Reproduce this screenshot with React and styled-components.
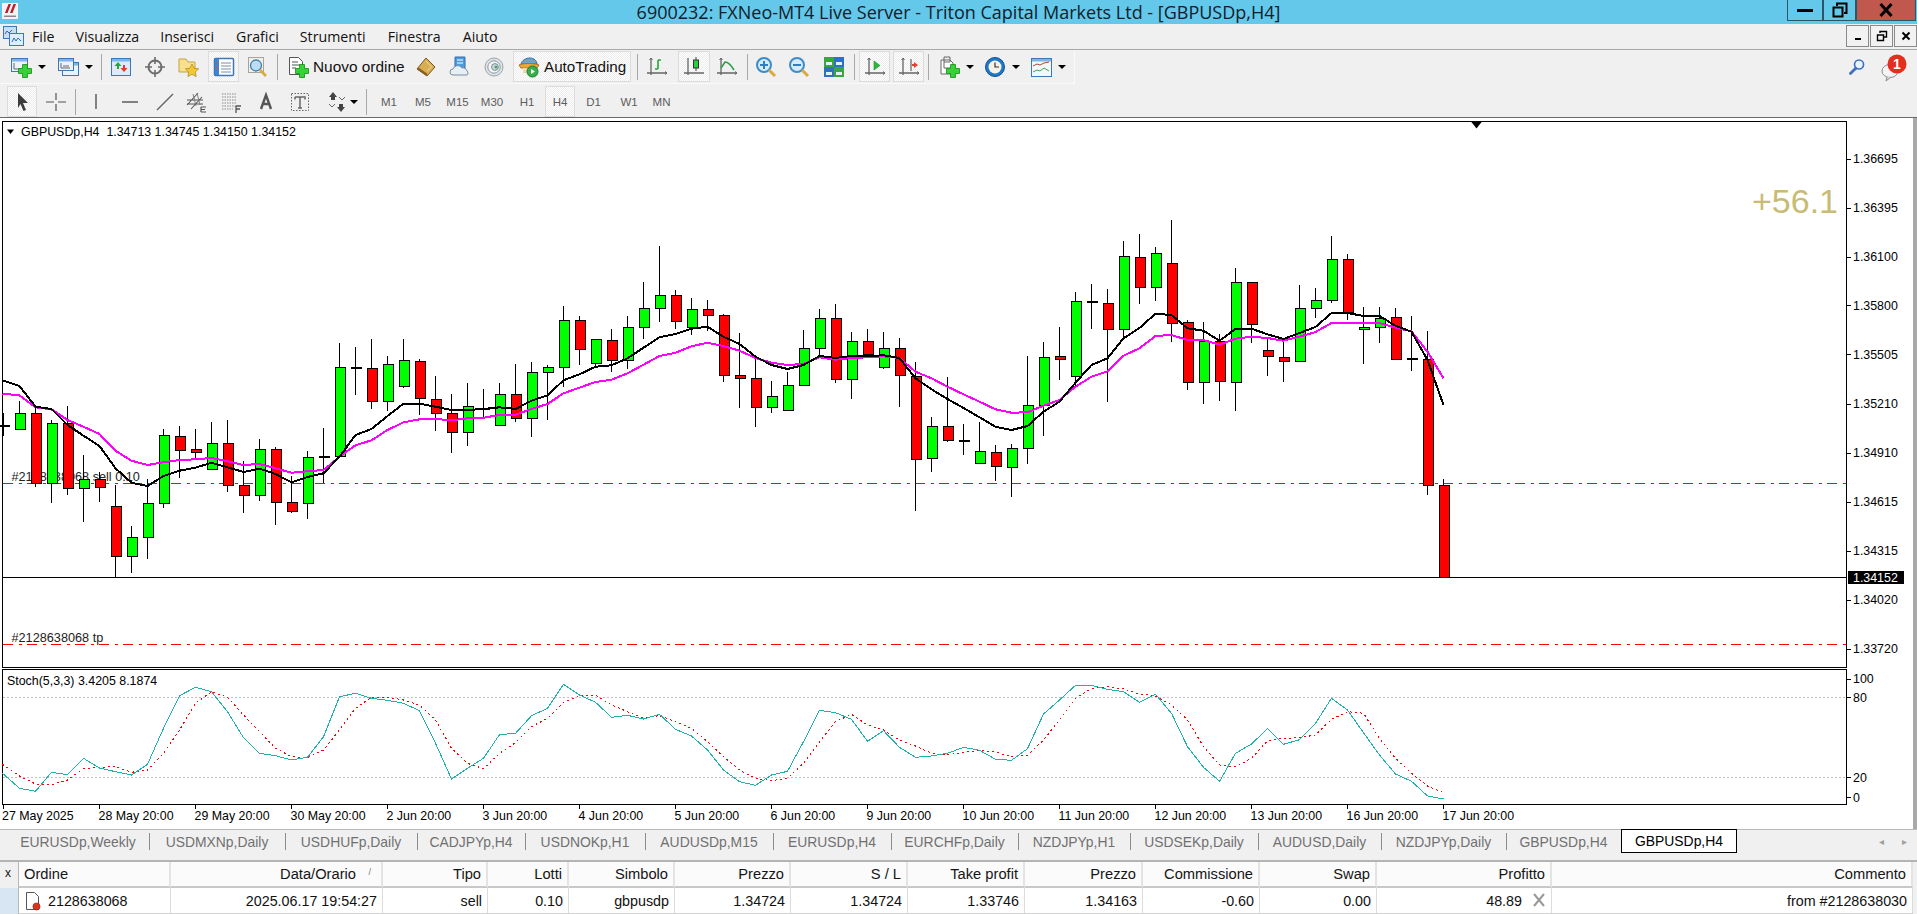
import React from "react";
import styled, { createGlobalStyle } from "styled-components";

const UI = '"Liberation Sans", Arial, sans-serif';

const Global = createGlobalStyle`
  html, body { margin: 0; padding: 0; background: #f0f0f0; overflow: hidden; }
  * { box-sizing: border-box; }
`;

const Page = styled.div`
  width: 1917px; height: 914px; display: flex; flex-direction: column;
  background: #f0f0f0; font-family: ${UI}; overflow: hidden;
`;

/* ---------- title bar ---------- */
const TitleBar = styled.div`
  height: 24px; flex: none; background: #63c8ea;
  display: grid; grid-template-columns: 1fr auto 1fr; align-items: start;
`;
const LogoBox = styled.div`padding: 3px 0 0 2px; height: 24px;`;
const TitleText = styled.div`
  font-family: "Open Sans", ${UI}; font-size: 18px; line-height: 24px; color: #10202a; white-space: nowrap;
`;
const WinButtons = styled.div`display: flex; justify-content: flex-end; padding-right: 1px;`;
const WinButton = styled.div`
  width: ${p => p.$w}px; height: 21px; display: flex; align-items: center; justify-content: center;
  border: 1px solid #2b5568; border-top: none; border-left-width: ${p => p.$first ? 1 : 0}px;
  background: ${p => p.$close ? "#c0584e" : "transparent"};
`;

/* ---------- menu ---------- */
const MenuBar = styled.div`
  height: 26px; flex: none; display: flex; align-items: center; background: #f0f0f0;
  border-bottom: 1px solid #a8a8a8;
`;
const MenuIconBox = styled.div`width: 32px; padding-left: 3px; display: flex; align-items: center;`;
const MenuItem = styled.div`
  font-family: "Open Sans", ${UI}; font-size: 14.2px; color: #111; margin-right: ${p => p.$gap}px; line-height: 24px;
`;
const ChildButtons = styled.div`margin-left: auto; display: flex; gap: 1px; align-self: flex-start; padding-top: 1px;`;
const ChildButton = styled.div`
  width: 23px; height: 22px; border: 1px solid #8a8a8a; display: flex; align-items: center; justify-content: center; background: #f2f2f2;
`;

/* ---------- toolbars ---------- */
const Band = styled.div`
  height: ${p => p.$h}px; flex: none; display: flex; align-items: stretch; justify-content: space-between;
  background: #f0f0f0;
`;
const Toolbar = styled.div`
  display: flex; align-items: center; height: 100%; padding-top: ${p => p.$pt ?? 0}px;
  border-bottom: 1px solid ${p => p.$edge ? "#fafafa" : "transparent"};
  border-right: 1px solid ${p => p.$edge ? "#fafafa" : "transparent"};
`;
const Grip = styled.div`width: ${p => p.$w}px; height: 100%; flex: none;`;
const Sep = styled.div`width: 1px; height: 26px; flex: none; background: #a8a8a8;`;
const Tool = styled.div`
  width: ${p => p.$w}px; height: 31px; flex: none; display: flex; align-items: center; justify-content: center;
  gap: ${p => p.$gap ?? 6}px; margin-left: ${p => p.$ml ?? 0}px;
  ${p => p.$on && `
    border: 1px solid #dcdcdc;
    background: repeating-conic-gradient(#ffffff 0 25%, #ececec 0 50%) 0 0 / 2px 2px;
  `}
`;
const Caret = styled.span`
  width: 0; height: 0; flex: none; border-left: 4px solid transparent; border-right: 4px solid transparent; border-top: 4px solid #000;
`;
const LabelTool = styled.div`
  height: 31px; flex: none; display: flex; align-items: center; gap: 4px; padding: 0 0 0 9px;
  font-size: 15.4px; color: #111; white-space: nowrap; width: 132px;
`;
const AutoTrading = styled.div`
  height: 31px; width: 118px; flex: none; margin-left: 3px; display: flex; align-items: center; gap: 4px; padding-left: 4px;
  font-size: 15.2px; color: #111; white-space: nowrap;
  border: 1px solid #dcdcdc;
  background: repeating-conic-gradient(#ffffff 0 25%, #ececec 0 50%) 0 0 / 2px 2px;
`;
const Period = styled.div`
  width: ${p => p.$w}px; height: 31px; flex: none; display: flex; align-items: center; justify-content: center;
  font-size: 11.5px; color: #5c5c5c;
  ${p => p.$on && `
    border: 1px solid #dcdcdc;
    background: repeating-conic-gradient(#ffffff 0 25%, #ececec 0 50%) 0 0 / 2px 2px;
  `}
`;
const RightTools = styled.div`display: flex; align-items: flex-start; padding-top: 4px; padding-right: 9px; gap: 12px;`;
const SearchBox = styled.div`margin-top: 4px; display: flex;`;

/* ---------- chart window ---------- */
const ChartRow = styled.div`
  height: 712px; flex: none; display: flex; background: #fff; border-top: 1px solid #6a6a6a; margin-top: 0;
`;
const ChartSvg = styled.svg`display: block; flex: none; background: #fff;`;
const ScrollEdge = styled.div`flex: 1; background: #a9a9a9; margin-left: 1px;`;

/* ---------- tabs ---------- */
const TabBar = styled.div`
  height: 24px; flex: none; display: flex; align-items: stretch; padding-left: 7px; position: relative;
  border-top: 1px solid #b8b8b8; background: #f0f0f0;
`;
const Tab = styled.div`
  width: ${p => p.$w}px; flex: none; display: flex; align-items: center; justify-content: center;
  font-size: 13.9px; white-space: nowrap; color: ${p => p.$on ? "#000" : "#707070"};
  ${p => p.$on
    ? `background:#fff; border-right:1px solid #000; border-bottom:1px solid #000; border-top:1px solid #000; border-left:1px solid #000; margin-top:-1px;`
    : `&::after{content:"";}`}
`;
const TabSep = styled.div`width: 1px; margin: 3px -1px 3px 0; background: #8c8c8c; flex: none;`;
const TabArrows = styled.div`
  position: absolute; right: 10px; top: 6px; display: flex; gap: 18px; color: #a0a0a0; font-size: 10px;
`;
const Spacer = styled.div`height: ${p => p.$h}px; flex: none;`;

/* ---------- orders table ---------- */
const Dock = styled.div`height: 54px; flex: none; display: flex; border-top: 2px solid #b4b4b4;`;
const DockSide = styled.div`
  width: 18px; flex: none; display: flex; flex-direction: column; background: #f0f0f0;
`;
const DockClose = styled.div`height: 26px; font-size: 12px; color: #111; padding: 4px 0 0 5px;`;
const DockBlue = styled.div`flex: 1; background: #d8e5f3;`;
const Table = styled.div`
  width: 1894px; flex: none; display: grid; grid-template-columns: 152px 212px 105px 81px 106px 116px 117px 117px 118px 117px 117px 175px 361px;
  grid-template-rows: 26px 25px 1fr; border-left: 1px solid #b8b8b8;
`;
const HeadCell = styled.div`
  background: #fbfbfb; border-right: 2px solid #e4e4e4; border-bottom: 2px solid #c8c8c8;
  display: flex; align-items: center; justify-content: ${p => p.$left ? "flex-start" : "flex-end"};
  padding: 0 ${p => p.$pr ?? 5}px 0 5px; font-size: 14.7px; color: #151515; white-space: nowrap; position: relative;
`;
const SortMark = styled.span`position: absolute; right: 10px; top: 5px; font-size: 9px; color: #777;`;
const Cell = styled.div`
  background: #fff; border-right: 1px solid #dcdcdc;
  display: flex; align-items: center; justify-content: ${p => p.$left ? "flex-start" : "flex-end"};
  padding: 0 ${p => p.$pr ?? 5}px 0 5px; font-size: 14.3px; color: #111; white-space: nowrap; gap: 6px; position: relative;
`;
const CloseMark = styled.span`position: absolute; right: 4px; top: 5px; display: flex;`;
const Foot = styled.div`grid-column: 1 / -1; background: #d2d2d2;`;

/* ---------- icons ---------- */
const Svg = ({ s = 22, children, vb = "0 0 22 22" }) => <svg width={s} height={s} viewBox={vb}>{children}</svg>;
const Plus = ({ x = 0, y = 0 }) => (
  <path transform={`translate(${x} ${y})`} d="M4 0h5v4h4v5H9v4H4V9H0V4h4z" fill="#35d335" stroke="#168a16" strokeWidth=".8" />
);
const Wnd = ({ x, y, w, h, f = "#eaf3fc" }) => (
  <g>
    <rect x={x + .5} y={y + .5} width={w} height={h} fill={f} stroke="#3c78b8" />
    <rect x={x + 1} y={y + 1} width={w - 1} height="2.5" fill="#7fb4e6" />
  </g>
);
const Axes = ({ c = "#666" }) => (
  <g stroke={c} strokeWidth="1.3" fill="none">
    <path d="M5 2v17M1 17h20" />
    <path d="M3.5 4L5 2l1.5 2M19 15.5l2 1.5-2 1.5" strokeWidth="1" />
  </g>
);
const I = {
  newChart: <Svg><Wnd x={1} y={2} w={16} h={13} /><path d="M4 7v6h8" stroke="#667" fill="none" /><Plus x={8.5} y={8.5} /></Svg>,
  profiles: <Svg><Wnd x={5} y={6} w={16} h={13} /><Wnd x={1} y={2} w={15} h={12} /><path d="M4 7v5h9M6 10h6" stroke="#667" fill="none" /></Svg>,
  market: <Svg><Wnd x={1} y={2} w={19} h={17} f="#dcebf9" /><path d="M8 6l3.5 4H9v3H7v-3H4.5z" fill="#22aa33" /><path d="M14 16l-3.5-4H13V9h2v3h2.5z" fill="#e23a2a" /></Svg>,
  data: <Svg><circle cx="11" cy="11" r="6.5" fill="none" stroke="#6c6c6c" strokeWidth="2" /><path d="M11 1v7M11 14v7M1 11h7M14 11h7" stroke="#6c6c6c" strokeWidth="1.6" /></Svg>,
  nav: <Svg><path d="M1 3h7l2 3h7v10H1z" fill="#f8e08e" stroke="#c7a23c" /><path d="M14 8l2.1 4.2 4.6.6-3.4 3.2.9 4.6-4.2-2.3-4.1 2.3.8-4.6-3.3-3.2 4.6-.6z" fill="#f4c832" stroke="#a88417" strokeWidth=".7" /></Svg>,
  terminal: <Svg><rect x="1.5" y="2.5" width="19" height="17" rx="1" fill="#fff" stroke="#3c78b8" strokeWidth="1.5" /><rect x="2" y="3" width="4" height="16" fill="#3f86d2" /><path d="M8 7h10M8 10h10M8 13h10M8 16h10" stroke="#7b8da3" /><path d="M3 7h2M3 10h2M3 13h2" stroke="#e04c3c" /></Svg>,
  tester: <Svg><rect x="1.5" y="1.5" width="15" height="15" fill="#f2efe8" stroke="#a9a49a" /><circle cx="9" cy="9.5" r="5.5" fill="#bcdcf2" stroke="#3f7fb0" strokeWidth="1.3" /><path d="M13 14l6 6" stroke="#d8ab3c" strokeWidth="2.6" /></Svg>,
  order: <Svg><path d="M2.5 1.5h9l4 4v13h-13z" fill="#fff" stroke="#555" /><path d="M5 6h6M5 9h8M5 12h4" stroke="#555" /><Plus x={8.5} y={8.5} /></Svg>,
  editor: <Svg><path d="M11 2l9 9-8 9-10-7z" fill="#d9ad52" stroke="#7c5620" /><path d="M2 13l10 7v-2.5L3.5 11.5z" fill="#8a5e24" /><path d="M11 5l5.5 6-4.5 4" stroke="#f1dc9c" fill="none" /></Svg>,
  cloud: <Svg><path d="M6 1h10v12H6z" fill="#4e9be0" stroke="#2f6eb0" /><path d="M8 4h6M8 7h6" stroke="#fff" /><path d="M4 19a3 3 0 0 1 0-6 5 5 0 0 1 9-1 4 4 0 0 1 5 3 2.5 2.5 0 0 1 0 4z" fill="#e6eef6" stroke="#7c8ca0" /></Svg>,
  signal: <Svg><circle cx="11" cy="11" r="9" fill="#dfe3e6" stroke="#9aa5ad" /><circle cx="11" cy="11" r="6.2" fill="#f2f4f5" stroke="#8b9aa5" /><circle cx="12" cy="11" r="3.4" fill="#cfd7dc" stroke="#7a8e9c" /><circle cx="13" cy="11" r="1.5" fill="#45a55a" /></Svg>,
  auto: <Svg><path d="M3 8c1-4 5-6 9-6s7 3 7 6z" fill="#6da4cc" stroke="#3f6f94" /><path d="M1 9c4-2 15-2 20 0l-2 3H3z" fill="#e9a93a" stroke="#a8741c" /><path d="M5 12h11v5H5z" fill="#f3d9a8" /><circle cx="14.5" cy="15.5" r="5.5" fill="#35b04a" stroke="#1d7c2e" /><path d="M13 13l4 2.5-4 2.5z" fill="#fff" /></Svg>,
  bars: <Svg><Axes /><path d="M12 4v9M12 4h3M12 13H9" stroke="#25a83a" strokeWidth="1.6" fill="none" /></Svg>,
  candles: <Svg><path d="M5 2v17M1 17h20" stroke="#666" strokeWidth="1.3" fill="none" /><path d="M13 1v14" stroke="#444" /><rect x="10.5" y="4" width="5" height="8" fill="#25d23a" stroke="#333" /></Svg>,
  line: <Svg><Axes /><path d="M5 12l4-6c3 0 6 3 9 8" stroke="#2f9e4a" strokeWidth="1.6" fill="none" /></Svg>,
  zoomIn: <Svg><circle cx="9" cy="9" r="7" fill="#d5ebf9" stroke="#3c8cc8" strokeWidth="2" /><path d="M5 9h8M9 5v8" stroke="#2f7fc0" strokeWidth="2" /><path d="M14 14l6 6" stroke="#d8ab3c" strokeWidth="3" /></Svg>,
  zoomOut: <Svg><circle cx="9" cy="9" r="7" fill="#d5ebf9" stroke="#3c8cc8" strokeWidth="2" /><path d="M5 9h8" stroke="#2f7fc0" strokeWidth="2" /><path d="M14 14l6 6" stroke="#d8ab3c" strokeWidth="3" /></Svg>,
  tile: <Svg><rect x="1" y="1" width="10" height="10" fill="#38a83a" /><rect x="11" y="1" width="10" height="10" fill="#2f6fc8" /><rect x="1" y="11" width="10" height="10" fill="#2f6fc8" /><rect x="11" y="11" width="10" height="10" fill="#38a83a" /><path d="M3 6h6v3H3zM13 6h6v3h-6zM3 16h6v3H3zM13 16h6v3h-6z" fill="#e4f0fb" /></Svg>,
  scroll: <Svg><Axes /><path d="M10 5l6 4.5-6 4.5z" fill="#2fb83f" stroke="#1f8a2c" strokeWidth=".6" /></Svg>,
  shift: <Svg><Axes /><path d="M13 3v12" stroke="#444" /><path d="M20 9l-4-3v2h-2v2h2v2z" fill="#e2402a" /></Svg>,
  indic: <Svg><path d="M3 4h9l3 3v11H3z" fill="#fff" stroke="#666" /><path d="M6 1h6v5H6zM6 6v6h6" stroke="#666" fill="none" /><Plus x={8.5} y={8.5} /></Svg>,
  clock: <Svg><circle cx="11" cy="11" r="9.5" fill="#1f78c8" stroke="#0f4f8c" /><circle cx="11" cy="11" r="6.5" fill="#f6f3e6" /><path d="M11 6.5V11h4" stroke="#333" strokeWidth="1.2" fill="none" /></Svg>,
  tmpl: <Svg><Wnd x={1} y={2} w={20} h={18} f="#f4f8fc" /><path d="M3 10l4-2 3 1 4-2 5-1" stroke="#b04a2a" fill="none" /><path d="M3 16l4-2 3 1 4-3 5 3" stroke="#3ca84a" fill="none" /></Svg>,
  cursor: <Svg><path d="M7 2l10 10h-5l3 7-2.5 1-3-7L7 17z" fill="#3c3c3c" /></Svg>,
  cross: <Svg><path d="M11 2v7M11 13v7M1 11h8M13 11h8" stroke="#555" strokeWidth="1.2" /></Svg>,
  vline: <Svg><path d="M11 3v15" stroke="#666" strokeWidth="1.6" /></Svg>,
  hline: <Svg><path d="M3 11h16" stroke="#666" strokeWidth="1.6" /></Svg>,
  trend: <Svg><path d="M3 19L19 3" stroke="#666" strokeWidth="1.4" /></Svg>,
  channel: <Svg><path d="M1 14L12 2M5 18L16 6M1 9h16M1 13h16" stroke="#555" strokeWidth="1.1" /><path d="M7 3l3 12M11 2l3 12" stroke="#777" strokeWidth=".9" /><path d="M15 16h5M15 18.5h4M15 21h5M15 16v5" stroke="#555" strokeWidth="1.2" /></Svg>,
  fibo: <Svg><path d="M1 3h15M1 6h15M1 9h15M1 12h15M1 15h15M1 18h11" stroke="#8a8a8a" strokeDasharray="1.5 1" /><path d="M15 15h5M15 18h4M15 15v7" stroke="#555" strokeWidth="1.3" /></Svg>,
  letterA: <Svg><path d="M6 18l5-14 5 14M8 13h6" stroke="#555" strokeWidth="2.4" fill="none" /></Svg>,
  label: <Svg><rect x="2.5" y="2.5" width="17" height="17" fill="none" stroke="#666" strokeDasharray="1.5 1.5" /><path d="M6 6h10v2.5M6 6v2.5M11 6v11M9 17h4" stroke="#666" strokeWidth="1.5" fill="none" /></Svg>,
  arrows: <Svg><path d="M7 1l4 5H9v3H5V6H3z" fill="#444" /><path d="M15 21l-4-5h2v-3h4v3h2z" fill="#444" /><path d="M3 13l3 3 3-3M13 6l3 3 3-3" stroke="#666" fill="none" /></Svg>,
  search: <Svg s={18}><circle cx="13.5" cy="8" r="5.5" fill="#eaf2fb" stroke="#3f6fc0" strokeWidth="2" /><path d="M9.5 12.5L3 19" stroke="#3f6fc0" strokeWidth="3.4" strokeLinecap="round" /></Svg>,
};

const LogoIcon = () => (
  <svg width="16" height="16" viewBox="0 0 16 16">
    <rect width="16" height="16" fill="#f4f4f4" />
    <path d="M3 10l3.5-9h2.5l-3.5 9zM8 10l3.5-9h2.5l-3.5 9z" fill="#b81c24" />
    <path d="M2 12.5h12v1.5H2z" fill="#888" />
  </svg>
);
const MenuIcon = () => (
  <svg width="21" height="21" viewBox="0 0 21 21">
    <rect x=".5" y=".5" width="13" height="12" fill="#c8def5" stroke="#3c78b8" />
    <rect x="6.5" y="7.5" width="14" height="12" fill="#e0eefb" stroke="#3c78b8" />
    <path d="M2 8l2-3 2 2 3-3M9 16l2-4 2 3 2-3 3 3" stroke="#2d6cb0" fill="none" />
  </svg>
);
const ChatBadge = () => (
  <svg width="30" height="28" viewBox="0 0 30 28">
    <ellipse cx="12" cy="17" rx="8" ry="6.5" fill="#f4f4f4" stroke="#8c8c8c" />
    <path d="M9 23l-1 4 5-4" fill="#dcdcdc" stroke="#8c8c8c" />
    <circle cx="19" cy="10" r="9.5" fill="#e0301e" />
    <text x="19" y="15" textAnchor="middle" fontFamily={UI} fontWeight="700" fontSize="14" fill="#fff">1</text>
  </svg>
);

/* ---------- chart data (pixel rows read from the picture) ---------- */
const G = "g", R = "r", D = "d";
const C1 = [[D,257,257,220,288],[G,220,268,183,268],[R,220,430,205,440],[G,250,430,240,488],[R,250,445,198,465],[G,418,445,345,545],[R,418,442,395,485],[R,499,650,435,715],[G,592,650,558,698],[G,490,592,418,658],[G,286,490,267,503],[R,289,331,258,413],[R,328,338,267,355],[G,310,388,246,388],[R,310,436,240,455],[R,436,466,363,518],[G,328,466,297,482],[R,328,487,322,554],[R,487,514,408,518],[G,352,490,333,536],[D,351,351,264,430],[G,82,349,10,355],[D,83,83,21,165],[R,85,184,-3,206],[G,73,184,48,213],[G,61,139,-3,143],[R,64,175,57,225],[R,178,220,108,273],[R,220,277,162,339],[G,199,277,129,318]];
const C2 = [[D,537,537,477,565],[G,493,586,459,586],[R,493,565,402,575],[G,427,565,396,620],[G,412,427,405,570],[G,271,412,228,470],[R,271,358,258,404],[G,328,400,328,412],[R,331,391,297,426],[G,292,391,258,416],[G,235,292,156,326],[G,196,235,48,276],[R,196,274,180,297],[G,238,292,205,315],[R,238,256,210,302],[R,256,436,252,456],[R,436,445,309,533],[R,445,532,385,590],[G,499,532,453,548],[G,466,541,426,541],[G,355,466,300,466],[G,265,355,237,378],[R,265,448,222,458],[G,334,448,306,506],[R,334,373,297,380],[G,355,412,306,418],[R,355,436,324,530],[R,439,688,396,842],[G,589,685,561,725],[R,589,631,441,635]];
const C3 = [[D,692,692,642,734],[G,724,760,636,760],[R,727,769,705,812],[G,715,772,702,862],[G,586,715,438,761],[G,442,586,396,677],[R,439,448,351,510],[G,274,499,246,530],[D,275,275,222,356],[R,280,358,237,575],[G,139,358,93,385],[R,142,232,72,281],[G,130,232,111,272],[R,160,340,30,395],[R,337,517,330,539],[G,394,517,336,581],[R,394,514,372,572],[G,217,517,175,602],[R,217,343,217,398],[R,421,439,388,497],[R,442,454,390,515],[G,295,454,226,454],[G,271,295,235,324],[G,148,271,78,278],[R,148,307,132,330],[G,352,358,292,461],[G,325,352,292,398],[R,322,448,294,448],[D,448,448,318,482],[R,448,826,363,854],[R,826,1102,808,1102]];

const map = (arr, oy) => arr.map(v => oy + v / 3);
const candles = [
  ...C1.map(c => [c[0], ...map(c.slice(1), 340)]),
  ...C2.map(c => [c[0], ...map(c.slice(1), 230)]),
  ...C3.map(c => [c[0], ...map(c.slice(1), 210)]),
];
const black = [
  ...map([121,138,200,207,255,287,318,385,428,438,408,392,383,368,382,396,386,402,427,411,400,350,285,267,228,191,191,200,210,210], 340),
  ...map([537,532,537,512,496,451,433,410,406,385,353,322,312,296,290,320,342,380,405,417,405,378,384,378,378,376,384,445,478,507], 230),
  ...map([594,622,650,660,648,605,575,518,465,445,385,354,311,315,355,362,392,357,356,373,387,369,351,309,309,318,318,347,365,450,585], 210),
];
const magenta = [
  ...map([161,166,202,208,240,260,282,332,362,375,367,360,358,354,364,375,372,385,398,394,390,350,316,301,270,247,238,237,241,235], 340),
  ...map([563,555,554,537,522,490,473,456,449,430,404,378,368,349,338,348,362,384,398,405,402,382,389,384,382,379,384,425,445,470], 230),
  ...map([553,575,598,608,607,587,570,530,500,484,437,415,378,375,390,390,404,386,380,384,392,380,366,339,339,339,339,353,364,425,505], 210),
];
const teal = [
  ...map([400,445,454,397,404,355,384,395,405,373,265,167,142,155,215,293,340,347,360,352,290,170,160,175,181,190,212,310,417,385,355,284,280,227,205,133,165,187,232], 640),
  ...map([136,147,133,178,198,240,300,335,346,315,304,215,121,128,148,214,182,232,262,258,250,232,241,268,271,236,132,90,46,46,58,65,97,73,130,230,292,334,250,222,176,223,209,160,85,120,188,255,312,334,378,387], 670),
];
const redDot = [
  ...map([373,408,432,434,420,386,382,380,397,390,340,270,190,155,172,225,275,325,350,353,330,270,205,172,172,180,195,240,325,370,386,340,308,260,235,187,168,165,195], 640),
  ...map([125,144,137,155,175,215,260,300,325,332,325,280,215,155,133,165,180,210,228,250,255,247,241,246,260,256,210,150,85,55,50,57,72,78,105,150,230,285,290,265,212,205,203,195,148,125,130,205,265,310,348,368], 670),
];
const cx = i => 3.5 + 16 * i;
const pts = ys => ys.map((y, i) => `${i === 0 ? 2.5 : cx(i)},${y.toFixed(1)}`).join(" ");

const priceLabels = [["1.36695",158.7],["1.36395",207.5],["1.36100",256.7],["1.35800",305.3],["1.35505",354.3],["1.35210",403.7],["1.34910",452.7],["1.34615",501.7],["1.34315",550.7],["1.34020",599.7],["1.33720",648.7]];
const stochLabels = [["100",678.5],["80",697.3],["20",777.3],["0",797]];
const timeLabels = ["27 May 2025","28 May 20:00","29 May 20:00","30 May 20:00","2 Jun 20:00","3 Jun 20:00","4 Jun 20:00","5 Jun 20:00","6 Jun 20:00","9 Jun 20:00","10 Jun 20:00","11 Jun 20:00","12 Jun 20:00","13 Jun 20:00","16 Jun 20:00","17 Jun 20:00"];

const TXT = { fontFamily: UI, fontSize: 12.4, fill: "#000", style: { whiteSpace: "pre" } };

const Chart = () => (
  <ChartSvg width="1912" height="711" viewBox="0 118 1912 711">
    {/* frames */}
    <g shapeRendering="crispEdges" stroke="#000" fill="none">
      <path d="M2.5 121.5H1846.5V667.5H2.5zM2.5 669.5H1846.5V804.5H2.5z" />
      {priceLabels.map(([t, y]) => <path key={t} d={`M1847 ${Math.round(y) + .5}h4`} />)}
      {stochLabels.map(([t, y]) => <path key={t} d={`M1847 ${Math.round(y) + .5}h4`} />)}
      {timeLabels.map((t, i) => <path key={t} d={`M${3.5 + 96 * i} 805v4`} />)}
    </g>

    {/* header + trade labels, under the candles */}
    <path d="M7 129.5h7l-3.5 4.5z" fill="#000" />
    <text x="21" y="136.3" {...TXT}>{"GBPUSDp,H4  1.34713 1.34745 1.34150 1.34152"}</text>
    <text x="11.5" y="481" {...TXT} fontSize="12.7" fill="#222">#2128638068 sell 0.10</text>
    <text x="11.5" y="642" {...TXT} fontSize="12.7" fill="#222">#2128638068 tp</text>
    <path d="M1471 121.5h11l-5.5 7z" fill="#000" />

    <text x="1838" y="213" textAnchor="end" fontFamily={UI} fontSize="34" fill="#c8bc74">+56.1</text>

    {/* horizontal levels */}
    <g shapeRendering="crispEdges">
      <path d="M3 483.5H1846" stroke="#ff0000" strokeDasharray="10 6 3 5" />
      <path d="M3 644.5H1846" stroke="#ff0000" strokeDasharray="10 6 3 5" />
      <path d="M3 577.5H1846" stroke="#000" />
    </g>

    {/* candles */}
    <g shapeRendering="crispEdges">
      {candles.map(([t, top, bot, wt, wb], i) => {
        const x = cx(i);
        return (
          <g key={i}>
            <path d={`M${x} ${wt}V${wb}`} stroke="#000" />
            {t === D
              ? <rect x={x - 5} y={Math.round(top) - 1} width="11" height="2" fill="#000" />
              : <rect x={x - 4.5} y={Math.round(top) + .5} width="10" height={Math.max(1, Math.round(bot - top))} fill={t === G ? "#00ff00" : "#ff0000"} stroke="#000" />}
          </g>
        );
      })}
    </g>

    {/* moving averages */}
    <polyline points={pts(magenta)} fill="none" stroke="#ff00ff" strokeWidth="2" strokeLinejoin="round" shapeRendering="crispEdges" />
    <polyline points={pts(black)} fill="none" stroke="#000" strokeWidth="2" strokeLinejoin="round" shapeRendering="crispEdges" />

    {/* price axis */}
    {priceLabels.map(([t, y]) => <text key={t} x="1853" y={y + 4.5} {...TXT}>{t}</text>)}
    <rect x="1848" y="571" width="56" height="13" fill="#000" />
    <text x="1853" y="581.8" {...TXT} fill="#fff">1.34152</text>

    {/* stochastic */}
    <text x="7" y="685" {...TXT}>Stoch(5,3,3) 3.4205 8.1874</text>
    <g shapeRendering="crispEdges">
      <path d="M3 697.5H1846M3 777.5H1846" stroke="#c0c0c0" strokeDasharray="2 2" />
    </g>
    <polyline points={pts(redDot)} fill="none" stroke="#ff0000" strokeDasharray="2 3" shapeRendering="crispEdges" />
    <polyline points={pts(teal)} fill="none" stroke="#20b2aa" shapeRendering="crispEdges" />
    {stochLabels.map(([t, y]) => <text key={t} x="1853" y={y + 4.5} {...TXT}>{t}</text>)}

    {/* time axis */}
    {timeLabels.map((t, i) => <text key={t} x={i === 0 ? 2 : 2.5 + 96 * i} y="820" {...TXT}>{t}</text>)}
  </ChartSvg>
);

const tabs = [
  ["EURUSDp,Weekly",142],["USDMXNp,Daily",136],["USDHUFp,Daily",132],["CADJPYp,H4",108],["USDNOKp,H1",120],["AUDUSDp,M15",128],["EURUSDp,H4",118],["EURCHFp,Daily",127],["NZDJPYp,H1",112],["USDSEKp,Daily",128],["AUDUSD,Daily",123],["NZDJPYp,Daily",125],["GBPUSDp,H4",115],
];
const heads = ["Data/Orario","Tipo","Lotti","Simbolo","Prezzo","S / L","Take profit","Prezzo","Commissione","Swap"];
const vals = ["2025.06.17 19:54:27","sell","0.10","gbpusdp","1.34724","1.34724","1.33746","1.34163","-0.60","0.00"];

const OrderIcon = () => (
  <svg width="18" height="20" viewBox="0 0 18 20">
    <path d="M2.5 1.5h8l4 4v13h-12z" fill="#fff" stroke="#555" />
    <circle cx="12.5" cy="15.5" r="3.6" fill="#d8351e" stroke="#8c2010" strokeWidth=".6" />
  </svg>
);

export default function App() {
  return (
    <Page>
      <Global />
      <TitleBar>
        <LogoBox><LogoIcon /></LogoBox>
        <TitleText>6900232: FXNeo-MT4 Live Server - Triton Capital Markets Ltd - [GBPUSDp,H4]</TitleText>
        <WinButtons>
          <WinButton $w={36} $first><svg width="16" height="4"><rect width="16" height="3" y="1" fill="#000" /></svg></WinButton>
          <WinButton $w={33} $first><svg width="16" height="16" viewBox="0 0 16 16"><path d="M1.5 5.5h9v9h-9zM5 4V1.5h9.5V11H12" fill="none" stroke="#000" strokeWidth="2" /></svg></WinButton>
          <WinButton $w={60} $close $first><svg width="14" height="14" viewBox="0 0 14 14"><path d="M1.5 1L12.5 13M12.5 1L1.5 13" stroke="#000" strokeWidth="3" /></svg></WinButton>
        </WinButtons>
      </TitleBar>

      <MenuBar>
        <MenuIconBox><MenuIcon /></MenuIconBox>
        <MenuItem $gap={21}>File</MenuItem>
        <MenuItem $gap={21}>Visualizza</MenuItem>
        <MenuItem $gap={22}>Inserisci</MenuItem>
        <MenuItem $gap={21}>Grafici</MenuItem>
        <MenuItem $gap={22}>Strumenti</MenuItem>
        <MenuItem $gap={22}>Finestra</MenuItem>
        <MenuItem $gap={0}>Aiuto</MenuItem>
        <ChildButtons>
          <ChildButton><svg width="10" height="10"><rect x="2" y="7" width="6" height="2" fill="#000" /></svg></ChildButton>
          <ChildButton><svg width="12" height="12" viewBox="0 0 12 12"><path d="M1.5 5h6v5.5h-6zM4 3V1.5h6.5V7H8" fill="none" stroke="#000" strokeWidth="1.4" /></svg></ChildButton>
          <ChildButton><svg width="10" height="10" viewBox="0 0 10 10"><path d="M1.5 1.5l7 7M8.5 1.5l-7 7" stroke="#000" strokeWidth="2" /></svg></ChildButton>
        </ChildButtons>
      </MenuBar>

      <Band $h={34}>
        <Toolbar $edge>
          <Grip $w={8} />
          <Tool $w={40}>{I.newChart}<Caret /></Tool>
          <Tool $w={53}>{I.profiles}<Caret /></Tool>
          <Sep />
          <Tool $w={38}>{I.market}</Tool>
          <Tool $w={30}>{I.data}</Tool>
          <Tool $w={38}>{I.nav}</Tool>
          <Tool $w={31} $on>{I.terminal}</Tool>
          <Tool $w={38}>{I.tester}</Tool>
          <Sep />
          <LabelTool>{I.order}Nuovo ordine</LabelTool>
          <Tool $w={32}>{I.editor}</Tool>
          <Tool $w={36}>{I.cloud}</Tool>
          <Tool $w={32}>{I.signal}</Tool>
          <AutoTrading>{I.auto}AutoTrading</AutoTrading>
          <Grip $w={6} />
          <Sep />
          <Tool $w={38}>{I.bars}</Tool>
          <Tool $w={32} $ml={2} $on>{I.candles}</Tool>
          <Tool $w={34}>{I.line}</Tool>
          <Grip $w={3} />
          <Sep />
          <Tool $w={36}>{I.zoomIn}</Tool>
          <Tool $w={30}>{I.zoomOut}</Tool>
          <Tool $w={40}>{I.tile}</Tool>
          <Sep />
          <Tool $w={31} $ml={4} $on>{I.scroll}</Tool>
          <Tool $w={31} $ml={3} $on>{I.shift}</Tool>
          <Grip $w={4} />
          <Sep />
          <Tool $w={53}>{I.indic}<Caret /></Tool>
          <Tool $w={40}>{I.clock}<Caret /></Tool>
          <Tool $w={52}>{I.tmpl}<Caret /></Tool>
        </Toolbar>
        <RightTools>
          <SearchBox>{I.search}</SearchBox>
          <ChatBadge />
        </RightTools>
      </Band>

      <Band $h={33}>
        <Toolbar $pt={3}>
          <Tool $w={30} $ml={7} $on>{I.cursor}</Tool>
          <Tool $w={38}>{I.cross}</Tool>
          <Sep />
          <Tool $w={38} $ml={1}>{I.vline}</Tool>
          <Tool $w={30}>{I.hline}</Tool>
          <Tool $w={40}>{I.trend}</Tool>
          <Tool $w={24}>{I.channel}</Tool>
          <Tool $w={46}>{I.fibo}</Tool>
          <Tool $w={22}>{I.letterA}</Tool>
          <Tool $w={46}>{I.label}</Tool>
          <Tool $w={37} $gap={2}>{I.arrows}<Caret /></Tool>
          <Grip $w={6} />
          <Sep />
          <Grip $w={5} />
          <Period $w={34}>M1</Period>
          <Period $w={34}>M5</Period>
          <Period $w={35}>M15</Period>
          <Period $w={34}>M30</Period>
          <Period $w={36}>H1</Period>
          <Period $w={30} $on>H4</Period>
          <Period $w={37}>D1</Period>
          <Period $w={34}>W1</Period>
          <Period $w={31}>MN</Period>
        </Toolbar>
      </Band>

      <ChartRow>
        <Chart />
        <ScrollEdge />
      </ChartRow>

      <TabBar>
        {tabs.map(([t, w], i) => (
          <React.Fragment key={t + i}>
            <Tab $w={w}>{t}</Tab>
            {i < tabs.length - 1 && <TabSep />}
          </React.Fragment>
        ))}
        <Tab $w={116} $on>GBPUSDp,H4</Tab>
        <TabArrows><span>◂</span><span>▸</span></TabArrows>
      </TabBar>
      <Spacer $h={7} />

      <Dock>
        <DockSide>
          <DockClose>x</DockClose>
          <DockBlue />
        </DockSide>
        <Table>
          <HeadCell $left>Ordine</HeadCell>
          {heads.map((h, i) => (
            <HeadCell key={h + i} $pr={i === 0 ? 25 : 5}>
              {h}{i === 0 && <SortMark>/</SortMark>}
            </HeadCell>
          ))}
          <HeadCell $pr={5}>Profitto</HeadCell>
          <HeadCell>Commento</HeadCell>

          <Cell $left><OrderIcon />2128638068</Cell>
          {vals.map((v, i) => <Cell key={v + i}>{v}</Cell>)}
          <Cell $pr={29}>48.89<CloseMark><svg width="16" height="14" viewBox="0 0 16 14"><path d="M3 1l10 12M13 1L3 13" stroke="#999" strokeWidth="2" /></svg></CloseMark></Cell>
          <Cell>from #2128638030</Cell>
          <Foot />
        </Table>
      </Dock>
    </Page>
  );
}
